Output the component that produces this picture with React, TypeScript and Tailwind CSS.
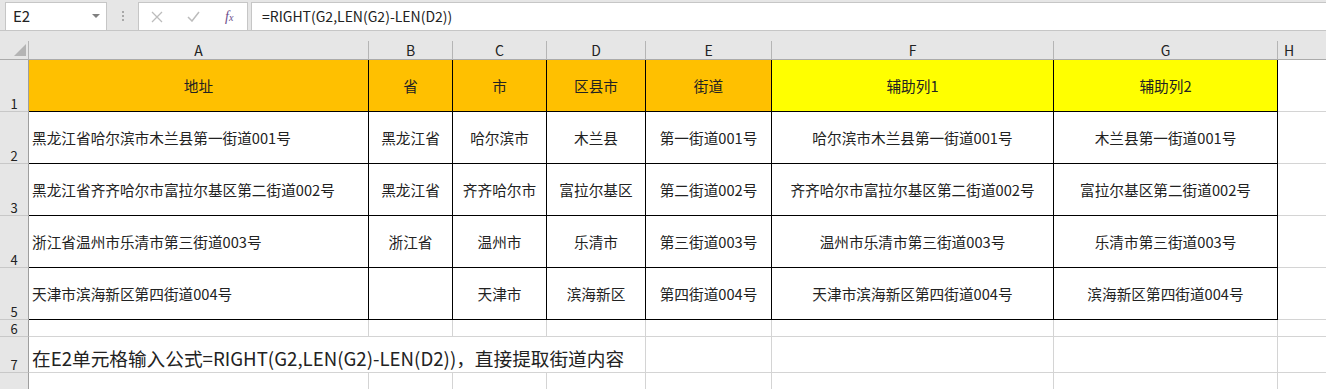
const FONT = { fontFamily: '"Noto Sans CJK SC", "Liberation Sans", sans-serif' };

const letters = ["A", "B", "C", "D", "E", "F", "G", "H"];

const header = ["地址", "省", "市", "区县市", "街道", "辅助列1", "辅助列2"];

const rows = [
  ["黑龙江省哈尔滨市木兰县第一街道001号", "黑龙江省", "哈尔滨市", "木兰县", "第一街道001号", "哈尔滨市木兰县第一街道001号", "木兰县第一街道001号"],
  ["黑龙江省齐齐哈尔市富拉尔基区第二街道002号", "黑龙江省", "齐齐哈尔市", "富拉尔基区", "第二街道002号", "齐齐哈尔市富拉尔基区第二街道002号", "富拉尔基区第二街道002号"],
  ["浙江省温州市乐清市第三街道003号", "浙江省", "温州市", "乐清市", "第三街道003号", "温州市乐清市第三街道003号", "乐清市第三街道003号"],
  ["天津市滨海新区第四街道004号", "", "天津市", "滨海新区", "第四街道004号", "天津市滨海新区第四街道004号", "滨海新区第四街道004号"],
];

function RowHead({ n }: { n?: number }) {
  return (
    <div className="flex items-end justify-center bg-[#e6e6e6] border-r border-b border-r-[#9e9e9e] border-b-[#c8c8c8] pb-[1px] text-[13px] leading-none text-[#222]">
      {n}
    </div>
  );
}

function TopBar() {
  return (
    <div className="h-[41px] bg-[#e6e6e6]">
      <div className="flex h-[31px] items-end border-b border-[#c6c6c6] pt-[3px]">
        <div className="ml-[5px] flex h-[28px] w-[102px] items-center justify-between border border-b-0 border-[#c6c6c6] bg-white pl-[7px] pr-[6px]">
          <span className="text-[15px] text-[#222]" style={FONT}>E2</span>
          <svg width="8" height="5" viewBox="0 0 8 5"><path d="M0 0h8L4 4z" fill="#808080" /></svg>
        </div>
        <div className="flex h-[28px] w-[31px] flex-col items-center justify-center gap-[2px]">
          <div className="h-[2px] w-[2px] bg-[#a8a8a8]" />
          <div className="h-[2px] w-[2px] bg-[#a8a8a8]" />
          <div className="h-[2px] w-[2px] bg-[#a8a8a8]" />
        </div>
        <div className="flex h-[28px] w-[110px] items-center border border-b-0 border-[#c6c6c6] bg-white">
          <div className="flex w-[37px] justify-center">
            <svg width="12" height="12" viewBox="0 0 12 12"><path d="M1 1l10 10M11 1L1 11" stroke="#bcbcbc" strokeWidth="1.3" /></svg>
          </div>
          <div className="flex w-[36px] justify-center">
            <svg width="13" height="11" viewBox="0 0 13 11"><path d="M1 6l4 4 7-9" stroke="#bcbcbc" strokeWidth="1.5" fill="none" /></svg>
          </div>
          <div className="flex w-[36px] justify-center">
            <span className="text-[14px] italic text-[#6b4d8a]" style={{ fontFamily: '"Liberation Serif", serif' }}>
              f<span className="text-[10px]">x</span>
            </span>
          </div>
        </div>
        <div className="ml-[3px] flex h-[28px] flex-1 items-center border border-b-0 border-r-0 border-[#c6c6c6] bg-white pl-[10px]">
          <span className="text-[14px] text-[#222]" style={FONT}>=RIGHT(G2,LEN(G2)-LEN(D2))</span>
        </div>
      </div>
    </div>
  );
}

export default function App() {
  return (
    <div className="h-[389px] w-[1326px] overflow-hidden bg-white" style={FONT}>
      <TopBar />
      <div className="grid grid-cols-[29px_340px_84px_94px_99px_126px_282px_224px_1fr] grid-rows-[19px_52px_52px_52px_52px_52px_17px_36px_36px]">
        {/* column headers */}
        <div className="relative bg-[#e6e6e6] border-r border-b border-r-[#b5b5b5] border-b-[#ababab]">
          <svg className="absolute left-[14px] top-[3px]" width="13" height="13" viewBox="0 0 13 13"><path d="M0 12H12V0z" fill="#b4b4b4" /></svg>
        </div>
        {letters.map((l, i) => (
          <div
            key={l}
            className={`flex items-center bg-[#e6e6e6] border-b border-b-[#ababab] text-[14px] leading-none text-[#222] ${i < 7 ? "justify-center border-r border-r-[#b5b5b5]" : "justify-start pl-[6px]"}`}
          >
            {l}
          </div>
        ))}

        {/* row 1 */}
        <RowHead n={1} />
        {header.map((h, i) => (
          <div
            key={h}
            className={`flex items-center justify-center border-r border-b border-black text-[14.67px] text-[#222] ${i < 5 ? "bg-[#ffc000]" : "bg-[#ffff00]"}`}
          >
            {h}
          </div>
        ))}
        <div className="border-b border-[#d4d4d4]" />

        {/* rows 2-5 */}
        {rows.map((r, ri) => (
          <div key={ri} className="contents">
            <RowHead n={ri + 2} />
            {r.map((c, ci) => (
              <div
                key={ci}
                className={`flex items-center whitespace-nowrap border-r border-b border-black text-[14.67px] text-[#222] ${ci === 0 ? "justify-start pl-[3px]" : "justify-center"}`}
              >
                {c}
              </div>
            ))}
            <div className="border-b border-[#d4d4d4]" />
          </div>
        ))}

        {/* row 6 */}
        <RowHead n={6} />
        {letters.map((l, i) => (
          <div key={l} className={`border-b border-[#d4d4d4] ${i < 7 ? "border-r" : ""}`} />
        ))}

        {/* row 7 */}
        <RowHead n={7} />
        <div className="col-span-4 flex items-end whitespace-nowrap border-r border-b border-[#d4d4d4] pl-[3px] pb-[4px] text-[18.67px] leading-none text-[#222]">
          在E2单元格输入公式=RIGHT(G2,LEN(G2)-LEN(D2))，直接提取街道内容
        </div>
        <div className="border-r border-b border-[#d4d4d4]" />
        <div className="border-r border-b border-[#d4d4d4]" />
        <div className="border-r border-b border-[#d4d4d4]" />
        <div className="border-b border-[#d4d4d4]" />

        {/* row 8, its number falls below the window */}
        <RowHead />
        {letters.map((l, i) => (
          <div key={l} className={`border-[#d4d4d4] ${i < 7 ? "border-r" : ""}`} />
        ))}
      </div>
    </div>
  );
}
